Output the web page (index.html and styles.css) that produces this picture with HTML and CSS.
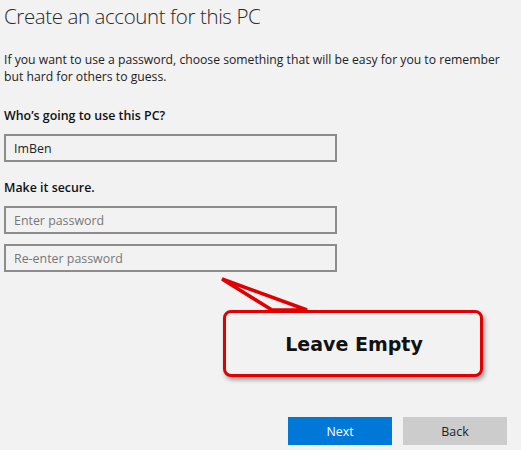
FILE: index.html
```html
<!DOCTYPE html>
<html>
<head>
<meta charset="utf-8">
<link rel="stylesheet" href="styles.css">
</head>
<body>
<div class="page">
  <h1 class="title">Create an account for this PC</h1>
  <p class="intro">If you want to use a password, choose something that will be easy for you to remember<br>but hard for others to guess.</p>
  <div class="label first">Who’s going to use this PC?</div>
  <div class="field"><span class="value">ImBen</span></div>
  <div class="label second">Make it secure.</div>
  <div class="field"><span class="placeholder">Enter password</span></div>
  <div class="field gap"><span class="placeholder">Re-enter password</span></div>
  <div class="actions">
    <button class="btn primary">Next</button>
    <button class="btn secondary">Back</button>
  </div>
  <div class="callout">
    <svg class="tail" width="90" height="40" viewBox="0 0 90 40">
      <polygon points="3,3 53,34 88,34" fill="#f2f2f2" stroke="#e00000" stroke-width="3.5" stroke-linejoin="miter"/>
    </svg>
    <div class="bubble">Leave Empty</div>
  </div>
</div>
</body>
</html>
```
FILE: styles.css
```css
html, body {
  margin: 0;
  padding: 0;
  background: #f2f2f2;
}
.page {
  position: relative;
  width: 521px;
  height: 450px;
  padding-left: 4px;
  box-sizing: border-box;
  font-family: "Open Sans", "Noto Sans", sans-serif;
  color: #1a1a1a;
  overflow: hidden;
}
.title {
  margin: 0;
  padding-top: 1px;
  font-family: "Open Sans", "Noto Sans", sans-serif;
  font-size: 20.5px;
  font-weight: 300;
  line-height: 30px;
  color: #2a2a2a;
  letter-spacing: -0.4px;
}
.intro {
  margin: 20px 0 0 0;
  font-size: 12.2px;
  line-height: 17px;
  color: #222;
}
.label {
  font-size: 12.4px;
  font-weight: 600;
  line-height: 17px;
  color: #111;
}
.label.first { margin-top: 22px; }
.label.second { margin-top: 17px; }
.field {
  margin-top: 10px;
  width: 333px;
  height: 28px;
  box-sizing: border-box;
  border: 2px solid #8c8c8c;
  background: #f2f2f2;
  display: flex;
  align-items: center;
  padding-left: 8px;
  font-size: 12.4px;
}
.field.gap { margin-top: 10px; }
.value { color: #222; }
.placeholder { color: #777; }
.actions {
  position: absolute;
  left: 288px;
  top: 417px;
  display: flex;
  gap: 11px;
}
.btn {
  width: 104px;
  height: 28px;
  border: none;
  font-family: "Open Sans", "Noto Sans", sans-serif;
  font-size: 12.4px;
  padding: 0;
}
.primary { background: #0078d7; color: #fff; }
.secondary { background: #cccccc; color: #222; }
.callout {
  position: absolute;
  left: 219px;
  top: 276px;
  width: 270px;
  height: 106px;
}
.tail {
  position: absolute;
  left: 0;
  top: 0;
  z-index: 2;
}
.bubble {
  position: absolute;
  left: 4px;
  top: 34px;
  width: 260px;
  height: 67px;
  box-sizing: border-box;
  border: 3px solid #e00000;
  border-radius: 8px;
  background: #f2f2f2;
  box-shadow: 2px 3px 4px rgba(0,0,0,0.35);
  display: flex;
  align-items: center;
  justify-content: center;
  font-family: "DejaVu Sans", sans-serif;
  font-weight: bold;
  font-size: 19px;
  color: #111;
  padding-left: 2px;
}
```
